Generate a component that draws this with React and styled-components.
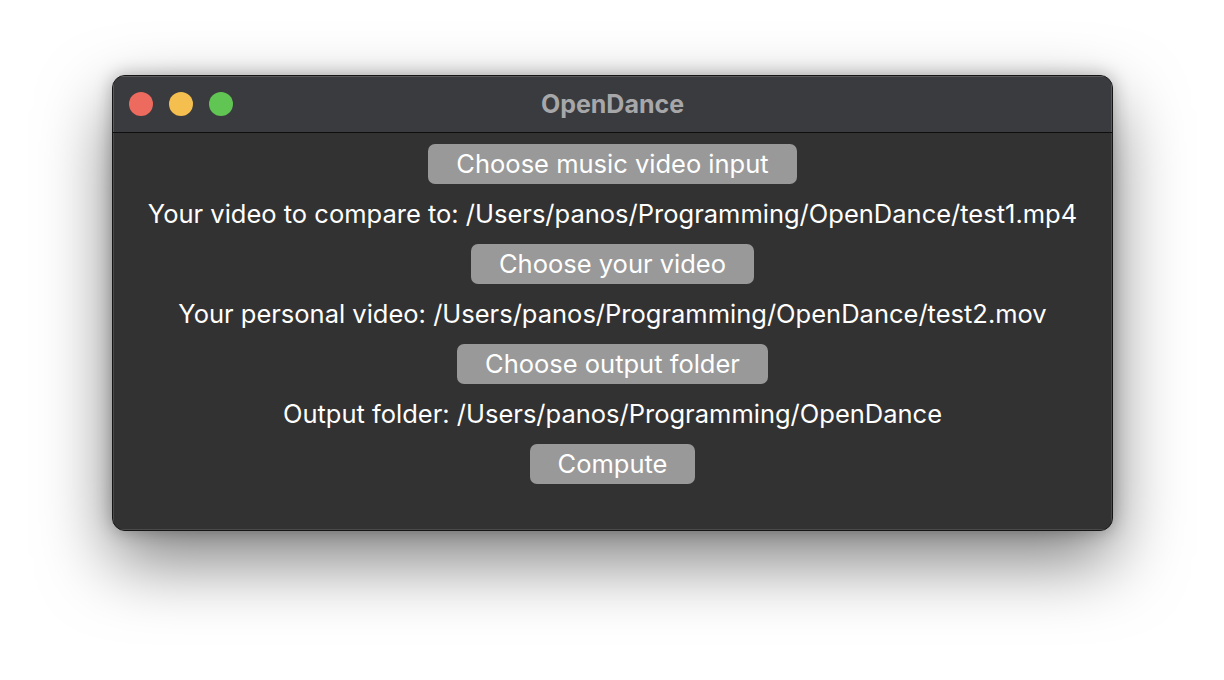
import styled, { createGlobalStyle } from "styled-components";

const Global = createGlobalStyle`
    html, body {
        margin: 0;
        padding: 0;
        background: #ffffff;
    }
    body {
        font-family: Inter, "Noto Sans", sans-serif;
        -webkit-font-smoothing: antialiased;
    }
`;

const Page = styled.div`
    width: 1224px;
    height: 680px;
    display: flex;
    justify-content: center;
    padding-top: 75px;
    box-sizing: border-box;
    padding-left: 1px;
`;

const Window = styled.div`
    width: 1001px;
    height: 456px;
    box-sizing: border-box;
    display: flex;
    flex-direction: column;
    border-radius: 13px;
    overflow: hidden;
    background: #323232;
    border: 1px solid #151515;
    box-shadow:
        0 30px 70px rgba(0, 0, 0, 0.5),
        0 0 18px rgba(0, 0, 0, 0.28);
`;

const TitleBar = styled.div`
    position: relative;
    height: 56px;
    flex-shrink: 0;
    display: flex;
    align-items: center;
    justify-content: center;
    background: #3a3b3f;
    border-bottom: 1px solid #0e0e0e;
    box-shadow: inset 1px 1px 0 #5a5a5c, inset -1px 0 0 #5a5a5c;
`;

const Lights = styled.div`
    position: absolute;
    left: 16px;
    top: 16px;
    display: flex;
    gap: 16px;
`;

const Light = styled.span`
    width: 24px;
    height: 24px;
    border-radius: 50%;
    background: ${props => props.color};
`;

const Title = styled.div`
    font-size: 25px;
    font-weight: 700;
    color: #a7a7a9;
`;

const Content = styled.div`
    flex: 1;
    display: flex;
    flex-direction: column;
    align-items: center;
    padding-top: 11px;
    box-shadow: inset 1px 0 0 #4a4a4a, inset -1px 0 0 #4a4a4a, inset 0 -1px 0 #4a4a4a;
`;

const Button = styled.button`
    height: 40px;
    padding: 0 28px;
    border: none;
    border-radius: 7px;
    background: #999999;
    color: #ffffff;
    font-family: Inter, "Noto Sans", sans-serif;
    font-size: 25.5px;
    line-height: 40px;
`;

const Label = styled.div`
    height: 60px;
    line-height: 60px;
    font-size: 25.5px;
    color: #ffffff;
    white-space: nowrap;
`;

export default function App() {
    return (
        <>
            <Global />
            <Page>
                <Window>
                    <TitleBar>
                        <Lights>
                            <Light color="#ed6a5e" />
                            <Light color="#f5bf4f" />
                            <Light color="#61c554" />
                        </Lights>
                        <Title>OpenDance</Title>
                    </TitleBar>
                    <Content>
                        <Button>Choose music video input</Button>
                        <Label>Your video to compare to: /Users/panos/Programming/OpenDance/test1.mp4</Label>
                        <Button>Choose your video</Button>
                        <Label>Your personal video: /Users/panos/Programming/OpenDance/test2.mov</Label>
                        <Button>Choose output folder</Button>
                        <Label>Output folder: /Users/panos/Programming/OpenDance</Label>
                        <Button>Compute</Button>
                    </Content>
                </Window>
            </Page>
        </>
    );
}
